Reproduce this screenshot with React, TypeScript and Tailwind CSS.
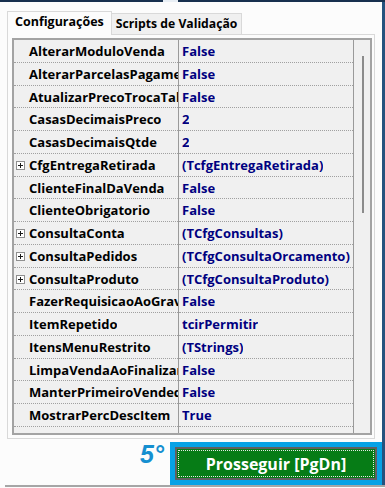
import React from "react";

type Row = { name: string; value: string; exp?: boolean };

const rows: Row[] = [
  { name: "AlterarModuloVenda", value: "False" },
  { name: "AlterarParcelasPagamento", value: "False" },
  { name: "AtualizarPrecoTrocaTabela", value: "False" },
  { name: "CasasDecimaisPreco", value: "2" },
  { name: "CasasDecimaisQtde", value: "2" },
  { name: "CfgEntregaRetirada", value: "(TcfgEntregaRetirada)", exp: true },
  { name: "ClienteFinalDaVenda", value: "False" },
  { name: "ClienteObrigatorio", value: "False" },
  { name: "ConsultaConta", value: "(TCfgConsultas)", exp: true },
  { name: "ConsultaPedidos", value: "(TCfgConsultaOrcamento)", exp: true },
  { name: "ConsultaProduto", value: "(TCfgConsultaProduto)", exp: true },
  { name: "FazerRequisicaoAoGravar", value: "False" },
  { name: "ItemRepetido", value: "tcirPermitir" },
  { name: "ItensMenuRestrito", value: "(TStrings)" },
  { name: "LimpaVendaAoFinalizar", value: "False" },
  { name: "ManterPrimeiroVendedor", value: "False" },
  { name: "MostrarPercDescItem", value: "True" },
  { name: "MostrarSaldoEstoque", value: "False" },
];

function PlusBox() {
  return (
    <svg width="9" height="9" viewBox="0 0 9 9" shapeRendering="crispEdges">
      <rect x="0.5" y="0.5" width="8" height="8" fill="#ffffff" stroke="#8f8f8f" />
      <path d="M2 4.5h5M4.5 2v5" stroke="#1a1a1a" strokeWidth="1" />
    </svg>
  );
}

export default function App() {
  return (
    <div className="w-[385px] h-[488px] bg-[#fcfcfc] flex flex-col overflow-hidden font-['Open_Sans',sans-serif]">
      {/* top border of window */}
      <div className="h-[2px] flex shrink-0">
        <div className="w-[163px] bg-[#17304e]" />
        <div className="w-[15px] bg-[#e8eef4]" />
        <div className="flex-1 bg-[#17304e]" />
      </div>

      <div className="h-[483px] flex shrink-0">
        <div className="flex-1 flex flex-col">
          {/* tabs */}
          <div className="flex items-end pl-[7px] pt-[9px]">
            <div className="relative z-10 h-[24px] -mb-px px-[7px] pb-[2px] flex items-center bg-[#fcfcfc] border border-b-0 border-[#d9d9d9] text-[12.5px] font-bold text-black">
              Configurações
            </div>
            <div className="h-[21px] px-[4px] flex items-center bg-[#f0f0f0] border border-l-0 border-b-0 border-[#d9d9d9] text-[12.2px] font-bold text-black">
              Scripts de Validação
            </div>
          </div>

          {/* tab panel */}
          <div className="w-[368px] h-[405px] ml-[7px] border border-[#d9d9d9] bg-[#fcfcfc] pt-[3px] pl-[4px] pr-[2px] pb-[3px]">
            <div className="w-full h-full border-2 border-[#a3a3a3] bg-[#f0f0f0] flex overflow-hidden">
              <div className="w-[165px] shrink-0 border-r border-[#9a9a9a] flex flex-col">
                {rows.map((r) => (
                  <div
                    key={r.name}
                    className="h-[22.75px] shrink-0 border-b border-dotted border-[#a0a0a0] flex items-center pt-[2px] overflow-hidden whitespace-nowrap"
                  >
                    <div className="w-[13px] shrink-0 pl-[2px] flex items-center">
                      {r.exp ? <PlusBox /> : null}
                    </div>
                    <span className="min-w-0 overflow-hidden pl-[2px] text-[13px] font-bold text-black">{r.name}</span>
                  </div>
                ))}
              </div>
              <div className="w-[175px] shrink-0 border-r border-[#9a9a9a] flex flex-col">
                {rows.map((r) => (
                  <div
                    key={r.name}
                    className="h-[22.75px] shrink-0 border-b border-dotted border-[#a0a0a0] flex items-center pt-[2px] pl-[3px] overflow-hidden whitespace-nowrap"
                  >
                    <span className="min-w-0 overflow-hidden text-[13px] font-bold text-[#000080]">{r.value}</span>
                  </div>
                ))}
              </div>
              <div className="flex-1 pt-[16px] pl-[8px]">
                <div className="w-[2px] h-[157px] bg-[#8b8b8b]" />
              </div>
            </div>
          </div>

          {/* bottom bar */}
          <div className="mt-[3px] flex items-start justify-end">
            <div className="mr-[6px] mt-[0px] text-[25px] leading-none font-bold italic text-[#158fd0] font-['Liberation_Sans',sans-serif]">
              5°
            </div>
            <div className="w-[212px] h-[43px] bg-[#07a2e6] p-[5px]">
              <div className="w-full h-full border-2 border-[#606060] bg-[#067c16] p-[1px]">
                <div className="w-full h-full border border-dotted border-[#e8e8e8] flex items-center justify-center text-[16px] font-bold text-white">
                  Prosseguir [PgDn]
                </div>
              </div>
            </div>
          </div>
        </div>
        <div className="w-[3px] bg-[#25527e]" />
      </div>

      <div className="h-[2px] ml-[5px] bg-[#a6a6a6] shrink-0" />
      <div className="h-[1px] bg-[#fcfcfc] shrink-0" />
    </div>
  );
}
